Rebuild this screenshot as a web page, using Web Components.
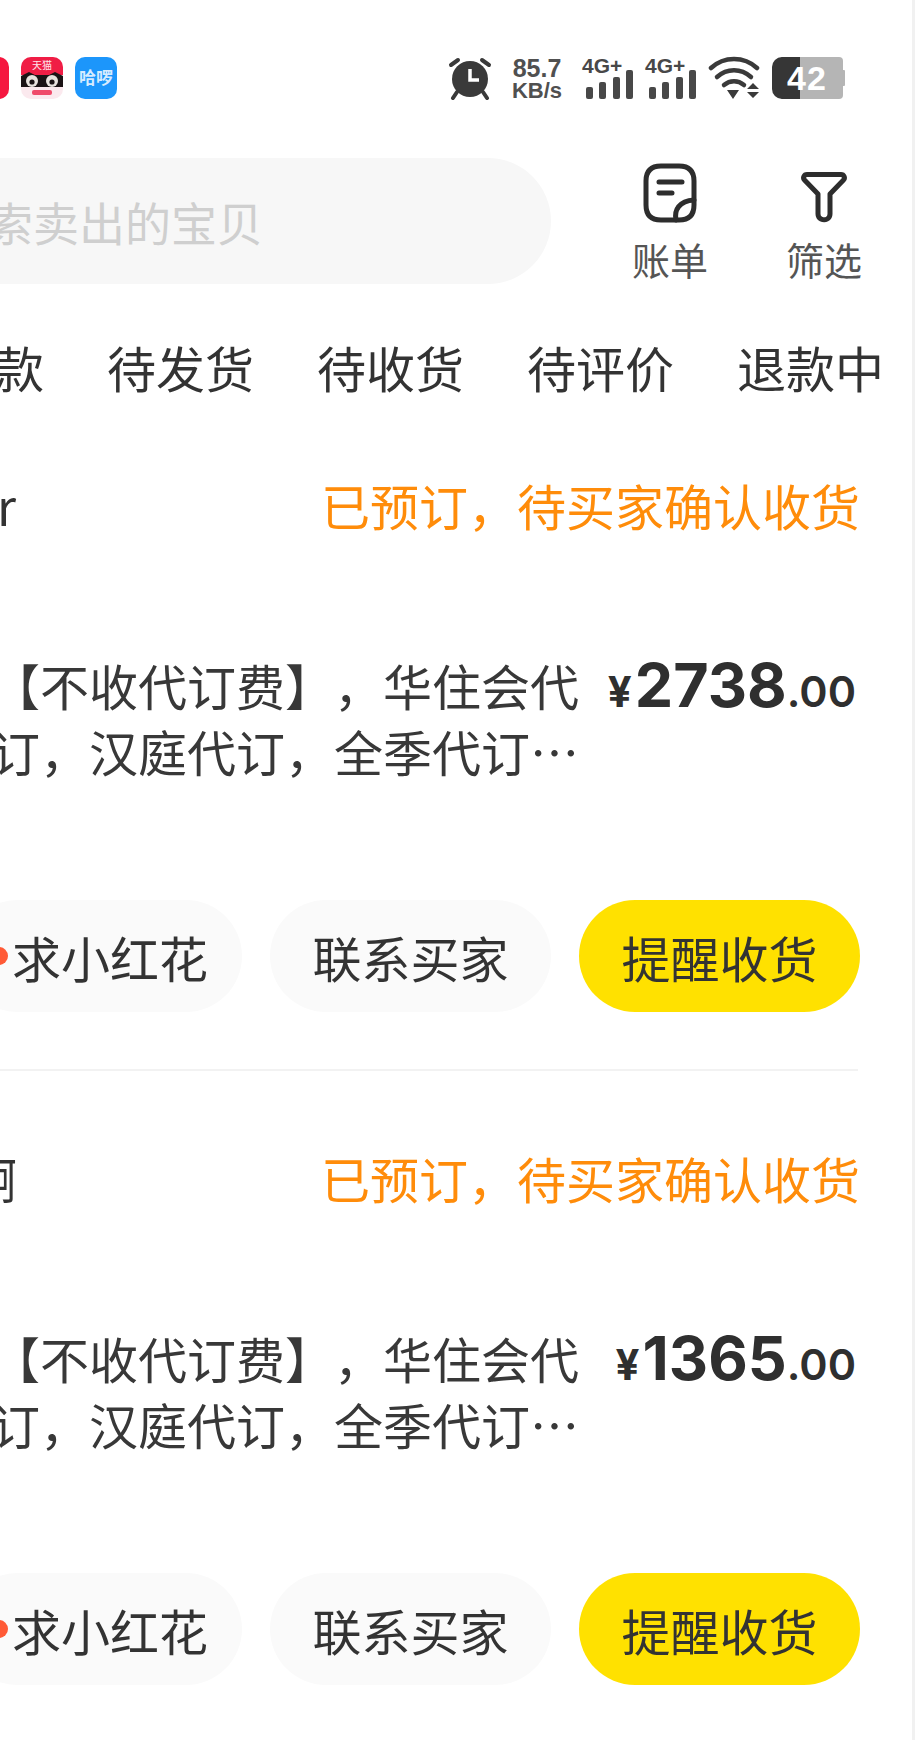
<!DOCTYPE html>
<html lang="zh">
<head>
<meta charset="utf-8">
<title>我卖出的</title>
<style>
  html, body { margin: 0; padding: 0; background: #fff; }
  body { width: 915px; height: 1740px; overflow: hidden; font-family: "Noto Sans CJK SC", "Liberation Sans", sans-serif; color: #333; }
</style>
</head>
<body>
<sold-page>
  <status-bar></status-bar>
  <search-row></search-row>
  <tab-row></tab-row>
  <order-card buyer="r" offset="-3" price="2738" divider></order-card>
  <order-card buyer="啊" offset="-32" price="1365"></order-card>
</sold-page>

<script>
// sold orders page, right part of a phone screen. Rows overflow to the left and get clipped.
(function() {

  const CJK = '"Noto Sans CJK SC", "Liberation Sans", sans-serif';

  class SoldPage extends HTMLElement {
    constructor() {
      super();
      this.attachShadow({ mode: 'open' });
      this.shadowRoot.innerHTML = `
        <style>
          :host {
            display: flex;
            flex-direction: column;
            box-sizing: border-box;
            width: 915px;
            height: 1740px;
            overflow: hidden;
            background: #fff;
            border-right: 3px solid #f1f1f1;
          }
        </style>
        <slot></slot>
      `;
    }
  }

  class StatusBar extends HTMLElement {
    constructor() {
      super();
      this.attachShadow({ mode: 'open' });
      const signal = `
        <svg class="sig" viewBox="0 0 52 44">
          <text x="0" y="17">4G+</text>
          <rect x="4" y="31" width="7" height="12" rx="2" fill="#484848"/>
          <rect x="17" y="26" width="7" height="17" rx="2" fill="#484848"/>
          <rect x="31" y="21" width="7" height="22" rx="2" fill="#484848"/>
          <rect x="44" y="14" width="7" height="29" rx="2" fill="#484848"/>
        </svg>`;
      this.shadowRoot.innerHTML = `
        <style>
          :host {
            display: flex;
            justify-content: space-between;
            align-items: center;
            height: 44px;
            margin-top: 56px;
            padding-right: 67px;
            color: #505050;
            font-family: "Liberation Sans", sans-serif;
          }
          .apps { display: flex; gap: 12px; margin-left: -33px; }
          .app { width: 42px; height: 42px; display: block; }
          .sys { display: flex; align-items: center; }
          .speed { display: flex; flex-direction: column; align-items: center; font-weight: 700; font-size: 25px; line-height: 24px; width: 52px; margin: 0 19px; }
          .speed span + span { font-size: 22px; line-height: 21px; }
          .sig { width: 52px; height: 44px; display: block; margin-right: 11px; overflow: visible; }
          .sig text { font: 700 21px "Liberation Sans", sans-serif; fill: #484848; }
          .wifi { width: 52px; height: 44px; display: block; margin-right: 11px; }
          .alarm { width: 44px; height: 44px; display: block; }
          .batt { position: relative; display: flex; width: 74px; height: 44px; }
          .batt .shell { display: block; width: 74px; height: 44px; }
          .batt span { position: absolute; left: 16px; top: 0; line-height: 44px; font-size: 34px; font-weight: 700; color: #fff; letter-spacing: 1px; }
        </style>
        <div class="apps">
          <svg class="app" viewBox="0 0 42 42"><rect width="42" height="42" rx="10" fill="#f5173f"/></svg>
          <svg class="app" viewBox="0 0 42 42">
            <rect width="42" height="42" rx="10" fill="#fbe9ee"/>
            <path d="M0 10a10 10 0 0 1 10-10h22a10 10 0 0 1 10 10v8H0z" fill="#f01d45"/>
            <path d="M0 19l8-4 6 3h14l6-3 8 4v11H0z" fill="#1b1315"/>
            <circle cx="11" cy="24" r="6" fill="#e8e2de"/><circle cx="31" cy="24" r="6" fill="#e8e2de"/>
            <circle cx="11" cy="25" r="2.6" fill="#1b1315"/><circle cx="31" cy="25" r="2.6" fill="#1b1315"/>
            <text x="21" y="12" text-anchor="middle" font-size="10" fill="#ffe3e8" font-family='"Noto Sans CJK SC", sans-serif'>天猫</text>
            <rect x="11" y="33" width="20" height="5" rx="2" fill="#ef4a6a"/>
          </svg>
          <svg class="app" viewBox="0 0 42 42">
            <rect width="42" height="42" rx="10" fill="#1c96fb"/>
            <text x="21" y="27" text-anchor="middle" font-size="17" font-weight="700" fill="#d6ecff" font-family='"Noto Sans CJK SC", sans-serif'>哈啰</text>
          </svg>
        </div>
        <div class="sys">
          <svg class="alarm" viewBox="0 0 44 44">
            <circle cx="22" cy="23" r="18" fill="#3a3a3a"/>
            <path d="M22 13v11h9" fill="none" stroke="#fff" stroke-width="3.5"/>
            <path d="M3 9l7-5M41 9l-7-5" stroke="#3a3a3a" stroke-width="4" stroke-linecap="round"/>
            <path d="M9 36l-4 6M35 36l4 6" stroke="#3a3a3a" stroke-width="4" stroke-linecap="round"/>
          </svg>
          <div class="speed"><span>85.7</span><span>KB/s</span></div>
          ${signal}
          ${signal}
          <svg class="wifi" viewBox="0 0 52 44">
            <g fill="none" stroke="#3a3a3a" stroke-width="4.5" stroke-linecap="round">
              <path d="M3 12C16 0 36 0 49 12"/>
              <path d="M9 21C19 12 33 12 43 21"/>
              <path d="M16 29C22 24 30 24 36 29"/>
            </g>
            <path d="M19 34h12l-6 9zM39 33l6-6 6 6zM39 36h12l-6 6z" fill="#3a3a3a"/>
          </svg>
          <div class="batt">
            <svg class="shell" viewBox="0 0 74 44">
              <path d="M10 1h58a4 4 0 0 1 4 4v34a4 4 0 0 1-4 4H10z" fill="#b5b5b5"/>
              <rect x="71" y="14" width="3" height="16" rx="1" fill="#b5b5b5"/>
              <path d="M11 1h18v42H11a10 10 0 0 1-10-10V11A10 10 0 0 1 11 1z" fill="#363636"/>
            </svg>
            <span>42</span>
          </div>
        </div>
      `;
    }
  }

  class SearchRow extends HTMLElement {
    constructor() {
      super();
      this.attachShadow({ mode: 'open' });
      this.shadowRoot.innerHTML = `
        <style>
          :host {
            display: flex;
            justify-content: flex-end;
            height: 126px;
            margin-top: 58px;
            padding-right: 50px;
            font-family: ${CJK};
          }
          .box {
            display: flex;
            align-items: center;
            justify-content: flex-end;
            flex: none;
            box-sizing: border-box;
            width: 600px;
            margin-right: 81px;
            padding-right: 288px;
            background: #f7f7f7;
            border-radius: 0 63px 63px 0;
            color: #cfcfcf;
            font-size: 46px;
            white-space: nowrap;
            overflow: hidden;
          }
          .acts { display: flex; gap: 78px; flex: none; }
          .act { display: flex; flex-direction: column; align-items: center; width: 76px; margin-top: 5px; font-size: 38px; line-height: 56px; color: #555; }
          svg { display: block; flex: none; width: 60px; height: 60px; margin-bottom: 8px; }
        </style>
        <div class="box"><span>索卖出的宝贝</span></div>
        <div class="acts">
          <div class="act">
            <svg viewBox="0 0 60 60" fill="none" stroke="#2d2d2d" stroke-width="5" stroke-linecap="round" stroke-linejoin="round">
              <path d="M21 3h18c10 0 15 5 15 15v24c0 10-5 15-15 15H21C11 57 6 52 6 42V18C6 8 11 3 21 3z"/>
              <path d="M19 19h23M19 30h13"/>
              <path d="M36 57c-2-10 3-19 18-20"/>
            </svg>
            <span>账单</span>
          </div>
          <div class="act">
            <svg viewBox="0 0 60 60" fill="none" stroke="#2d2d2d" stroke-width="5" stroke-linecap="round" stroke-linejoin="round">
              <path d="M13 11.5h34c3 0 4.500 3.500 2.500 5.500L36 31v20c0 5-5 7-9 5-2-1-3-3-3-5V31L10.500 17c-2-2-.5-5.500 2.500-5.500z"/>
            </svg>
            <span>筛选</span>
          </div>
        </div>
      `;
    }
  }

  class TabRow extends HTMLElement {
    constructor() {
      super();
      this.attachShadow({ mode: 'open' });
      this.shadowRoot.innerHTML = `
        <style>
          :host {
            display: flex;
            justify-content: flex-end;
            gap: 63px;
            height: 70px;
            margin-top: 48px;
            padding-right: 28px;
            font-family: ${CJK};
            font-size: 49px;
            line-height: 70px;
            color: #333;
            white-space: nowrap;
          }
        </style>
        <span>款</span><span>待发货</span><span>待收货</span><span>待评价</span><span>退款中</span>
      `;
    }
  }

  class OrderCard extends HTMLElement {
    constructor() {
      super();
      this.attachShadow({ mode: 'open' });
    }

    connectedCallback() {
      const buyer = this.getAttribute('buyer');
      const price = this.getAttribute('price');
      const offset = this.getAttribute('offset') || 0;
      this.shadowRoot.innerHTML = `
        <style>
          :host {
            display: block;
            box-sizing: border-box;
            flex: none;
            height: 673px;
            padding-top: 68px;
            padding-right: 52px;
            font-family: ${CJK};
            color: #333;
            text-spacing-trim: space-all;
          }
          .head { display: flex; justify-content: space-between; height: 70px; font-size: 49px; line-height: 70px; white-space: nowrap; }
          .status { color: #ff8c0a; }
          .body { display: flex; margin-top: 112px; }
          .title { flex: none; width: 579px; font-size: 49px; line-height: 66px; color: #383838; white-space: nowrap; }
          .title div { display: flex; justify-content: flex-end; }
          .price { flex: 1; display: flex; justify-content: flex-end; align-items: baseline; height: 66px; margin-right: 4px; font-family: Inter, "Liberation Sans", sans-serif; font-weight: 700; color: #2f2f2f; line-height: 66px; }
          .yen { font-size: 42px; margin-right: 3px; }
          .int { font-size: 61px; }
          .dec { font-size: 43px; font-weight: 600; }
          .btns { display: flex; justify-content: flex-end; gap: 28px; margin-top: 116px; }
          .btn { flex: none; display: flex; align-items: center; justify-content: center; box-sizing: border-box; width: 281px; height: 112px; border-radius: 56px; background: #fafafa; font-size: 49px; color: #333; white-space: nowrap; }
          .btn.main { background: #ffe100; }
          .btn.flower { justify-content: flex-end; padding-right: 34px; gap: 4px; }
          .dot { width: 18px; height: 18px; border-radius: 50%; background: #ff5a36; flex: none; }
          .line { height: 2px; background: #f2f2f2; margin-top: 57px; margin-right: 2px; }
        </style>
        <div class="head"><span style="margin-left:${offset}px">${buyer}</span><span class="status">已预订，待买家确认收货</span></div>
        <div class="body">
          <div class="title">
            <div>【不收代订费】，华住会代</div>
            <div>订，汉庭代订，全季代订…</div>
          </div>
          <div class="price"><span class="yen">¥</span><span class="int">${price}</span><span class="dec">.00</span></div>
        </div>
        <div class="btns">
          <div class="btn flower"><span class="dot"></span><span>求小红花</span></div>
          <div class="btn">联系买家</div>
          <div class="btn main">提醒收货</div>
        </div>
        ${this.hasAttribute('divider') ? '<div class="line"></div>' : ''}
      `;
    }
  }

  customElements.define('sold-page', SoldPage);
  customElements.define('status-bar', StatusBar);
  customElements.define('search-row', SearchRow);
  customElements.define('tab-row', TabRow);
  customElements.define('order-card', OrderCard);

})();
</script>
</body>
</html>
